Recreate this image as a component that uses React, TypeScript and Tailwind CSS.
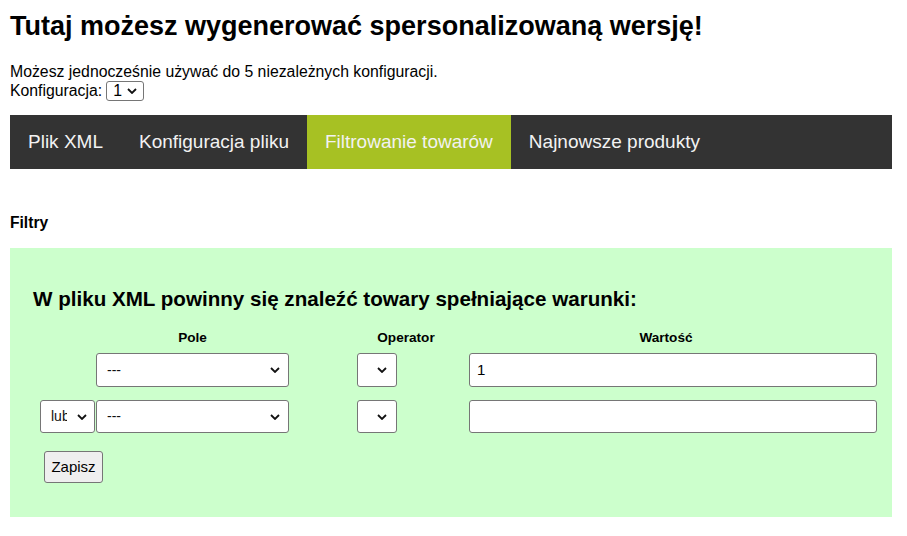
import React from "react";

const font = { fontFamily: '"Liberation Sans", Arial, sans-serif' };

function Chevron({ className = "" }: { className?: string }) {
  return (
    <svg viewBox="0 0 10 6" className={"h-[6px] w-[10px] " + className}>
      <path d="M1 1l4 4 4-4" fill="none" stroke="#111" strokeWidth="1.8" />
    </svg>
  );
}

function FakeSelect({
  value,
  className,
  textW = "",
}: {
  value: string;
  className: string;
  textW?: string;
}) {
  return (
    <div
      className={
        "flex items-center justify-between rounded-[3px] border border-[#767676] bg-white text-[14px] text-[#111] " +
        className
      }
    >
      <span className={"overflow-hidden whitespace-nowrap " + textW}>{value}</span>
      <Chevron />
    </div>
  );
}

const tabs = [
  "Plik XML",
  "Konfiguracja pliku",
  "Filtrowanie towarów",
  "Najnowsze produkty",
];

export default function App() {
  return (
    <div className="h-[536px] w-[907px] bg-white px-[10px] text-black" style={font}>
      <div className="w-[882px]">
        <h2 className="pt-[10px] text-[27px] font-bold leading-[32px]">
          Tutaj możesz wygenerować spersonalizowaną wersję!
        </h2>

        <div className="mt-[21px] text-[15.8px] leading-[18px]">
          Możesz jednocześnie używać do 5 niezależnych konfiguracji.
        </div>
        <div className="flex items-center gap-[4px] text-[15.8px] leading-[18px]">
          Konfiguracja:
          <div className="flex h-[20px] w-[38px] items-center justify-between rounded-[3px] border border-[#767676] px-[6px]">
            <span>1</span>
            <Chevron />
          </div>
        </div>

        <nav className="mt-[14px] flex h-[54px] bg-[#333333]">
          {tabs.map((t, i) => (
            <div
              key={t}
              className={
                "flex items-center px-[18px] text-[19px] text-[#f2f2f2] " +
                (i === 2 ? "bg-[#a7c123]" : "")
              }
            >
              {t}
            </div>
          ))}
        </nav>

        <div className="mt-[45px] text-[15.6px] font-bold leading-[18px]">Filtry</div>

        <section className="mt-[16px] h-[269px] bg-[#ccffcc] pt-[40px]">
          <h3 className="pl-[23px] text-[20.6px] font-bold leading-[22px]">
            W pliku XML powinny się znaleźć towary spełniające warunki:
          </h3>

          <div className="mt-[20px] grid grid-cols-[30px_56px_193px_68px_98px_14px_408px] items-center">
            <div className="col-start-3 text-center text-[13.6px] font-bold leading-[16px]">
              Pole
            </div>
            <div className="col-start-5 text-center text-[13.6px] font-bold leading-[16px]">
              Operator
            </div>
            <div className="col-span-2 col-start-6 text-center text-[13.6px] font-bold leading-[16px]">
              Wartość
            </div>

            <FakeSelect
              value="---"
              className="col-start-3 mt-[7px] h-[34px] pl-[10px] pr-[8px]"
            />
            <FakeSelect
              value=""
              className="col-start-5 mt-[7px] h-[34px] w-[40px] justify-end pr-[9px]"
            />
            <div className="col-start-7 mt-[7px] flex h-[34px] items-center rounded-[3px] border border-[#767676] bg-white px-[7px] text-[15px]">
              1
            </div>

            <FakeSelect
              value="lub"
              textW="w-[16px]"
              className="col-start-2 mt-[13px] h-[33px] w-[55px] pl-[10px] pr-[7px]"
            />
            <FakeSelect
              value="---"
              className="col-start-3 mt-[13px] h-[33px] pl-[10px] pr-[8px]"
            />
            <FakeSelect
              value=""
              className="col-start-5 mt-[13px] h-[33px] w-[40px] justify-end pr-[9px]"
            />
            <div className="col-start-7 mt-[13px] h-[33px] rounded-[3px] border border-[#767676] bg-white" />
          </div>

          <button className="ml-[34px] mt-[18px] h-[32px] w-[59px] rounded-[3px] border border-[#767676] bg-[#efefef] text-[15px] text-black">
            Zapisz
          </button>
        </section>
      </div>
    </div>
  );
}
